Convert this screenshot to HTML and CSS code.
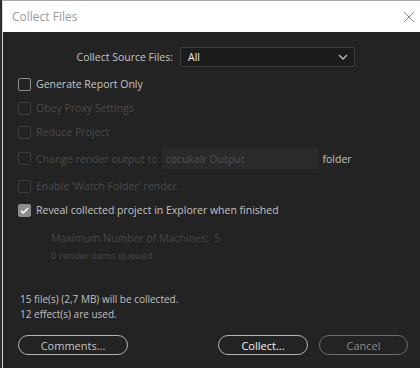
FILE: index.html
```html
<!doctype html>
<html lang="en">
	<head>
		<meta charset="utf-8">
		<title>Collect Files</title>
		<link rel="stylesheet" href="styles.css">
	</head>
	<body>
		<div class="window">
			<div class="titlebar">
				<span class="title">Collect Files</span>
				<svg class="close" width="12" height="12" viewBox="0 0 12 12">
					<path d="M1 1 L11 11 M11 1 L1 11" stroke="#8a8a8a" stroke-width="1" fill="none"/>
				</svg>
			</div>

			<div class="dialog">
				<div class="sourceRow">
					<label class="sourceLabel">Collect Source Files:</label>
					<div class="select">
						<span>All</span>
						<svg width="10" height="6" viewBox="0 0 10 6">
							<path d="M1 1 L5 5 L9 1" stroke="#bdbdbd" stroke-width="1.3" fill="none"/>
						</svg>
					</div>
				</div>

				<div class="options">
					<div class="check"><span class="box"></span>Generate Report Only</div>
					<div class="check disabled"><span class="box"></span>Obey Proxy Settings</div>
					<div class="check disabled"><span class="box"></span>Reduce Project</div>
					<div class="check disabled tall">
						<span class="box"></span>Change render output to
						<span class="field">cocukalr Output</span>
						<span class="folder">folder</span>
					</div>
					<div class="check disabled"><span class="box"></span>Enable 'Watch Folder' render</div>
					<div class="check">
						<span class="box checked">
							<svg width="11" height="11" viewBox="0 0 11 11">
								<path d="M2 5.6 L4.4 8 L9 3" stroke="#f2f2f2" stroke-width="1.8" fill="none"/>
							</svg>
						</span>Reveal collected project in Explorer when finished
					</div>
				</div>

				<div class="machines">
					<div class="machineLine">Maximum Number of Machines: <span class="count">5</span></div>
					<div class="queued">0 render items queued.</div>
				</div>

				<div class="summary">
					<div>15 file(s) (2,7 MB) will be collected.</div>
					<div>12 effect(s) are used.</div>
				</div>

				<div class="buttons">
					<button class="btn">Comments...</button>
					<span class="spacer"></span>
					<button class="btn primary">Collect...</button>
					<button class="btn muted">Cancel</button>
				</div>
			</div>
		</div>
	</body>
</html>
```

FILE: styles.css
```css
* {
	box-sizing: border-box;
}

body {
	margin: 0;
	background: #2e2e2e;
	font-family: "Open Sans", "Noto Sans", sans-serif;
}

.window {
	width: 418px;
	height: 368px;
	margin-left: 2px;
	border-top: 1px solid #a9a9a9;
	border-left: 1px solid #d6d6d6;
	display: flex;
	flex-direction: column;
	overflow: hidden;
}

.titlebar {
	height: 31px;
	background: #ffffff;
	display: flex;
	align-items: center;
	justify-content: space-between;
	padding: 0 5px 0 9px;
	flex-shrink: 0;
}

.title {
	font-size: 12px;
	color: #9a9a9a;
}

.dialog {
	flex: 1;
	background: #232323;
	padding: 15px 12px 0 15px;
	font-size: 10.5px;
	color: #c4c4c4;
}

.sourceRow {
	display: flex;
	align-items: center;
	gap: 7px;
}

.sourceLabel {
	width: 155px;
	text-align: right;
	color: #c4c4c4;
}

.select {
	width: 175px;
	height: 20px;
	background: #1c1c1c;
	border: 1px solid #3c3c3c;
	border-radius: 2px;
	display: flex;
	align-items: center;
	justify-content: space-between;
	padding: 0 6px 0 7px;
	color: #ececec;
}

.options {
	margin-top: 5px;
}

.check {
	height: 24px;
	display: flex;
	align-items: center;
	gap: 5px;
	white-space: nowrap;
}

.check.tall {
	height: 27px;
	margin: 1px 0 2px;
}

.box {
	width: 13px;
	height: 13px;
	border: 1.5px solid #8c8c8c;
	border-radius: 2px;
	display: flex;
	align-items: center;
	justify-content: center;
	flex-shrink: 0;
}

.box.checked {
	background: #8c8c8c;
}

.disabled {
	color: #4a4a4a;
}

.disabled .box {
	border-color: #3d3d3d;
}

.field {
	width: 157px;
	height: 21px;
	background: #2a2a2a;
	color: #4e4e4e;
	display: flex;
	align-items: center;
	padding-left: 4px;
	margin-left: -1px;
}

.folder {
	color: #c4c4c4;
	margin-left: -1px;
}

.machines {
	margin-top: 7px;
	padding-left: 33px;
	color: #474747;
}

.machineLine {
	height: 18px;
	line-height: 18px;
}

.count {
	margin-left: 3px;
}

.queued {
	font-size: 9.5px;
	line-height: 18px;
}

.summary {
	margin-top: 27px;
	padding-left: 2px;
	font-size: 10px;
	line-height: 15px;
	color: #c0c0c0;
}

.buttons {
	margin-top: 13px;
	display: flex;
	align-items: center;
	gap: 11px;
}

.spacer {
	flex: 1;
}

.btn {
	height: 20px;
	border: 1.5px solid #b4b4b4;
	border-radius: 10px;
	background: transparent;
	font-family: inherit;
	font-size: 11px;
	color: #c4c4c4;
	padding: 0;
	width: 110px;
}

.btn.primary {
	width: 90px;
	color: #f4f4f4;
}

.btn.muted {
	width: 89px;
	border-color: #6c6c6c;
	color: #8c8c8c;
}
```
